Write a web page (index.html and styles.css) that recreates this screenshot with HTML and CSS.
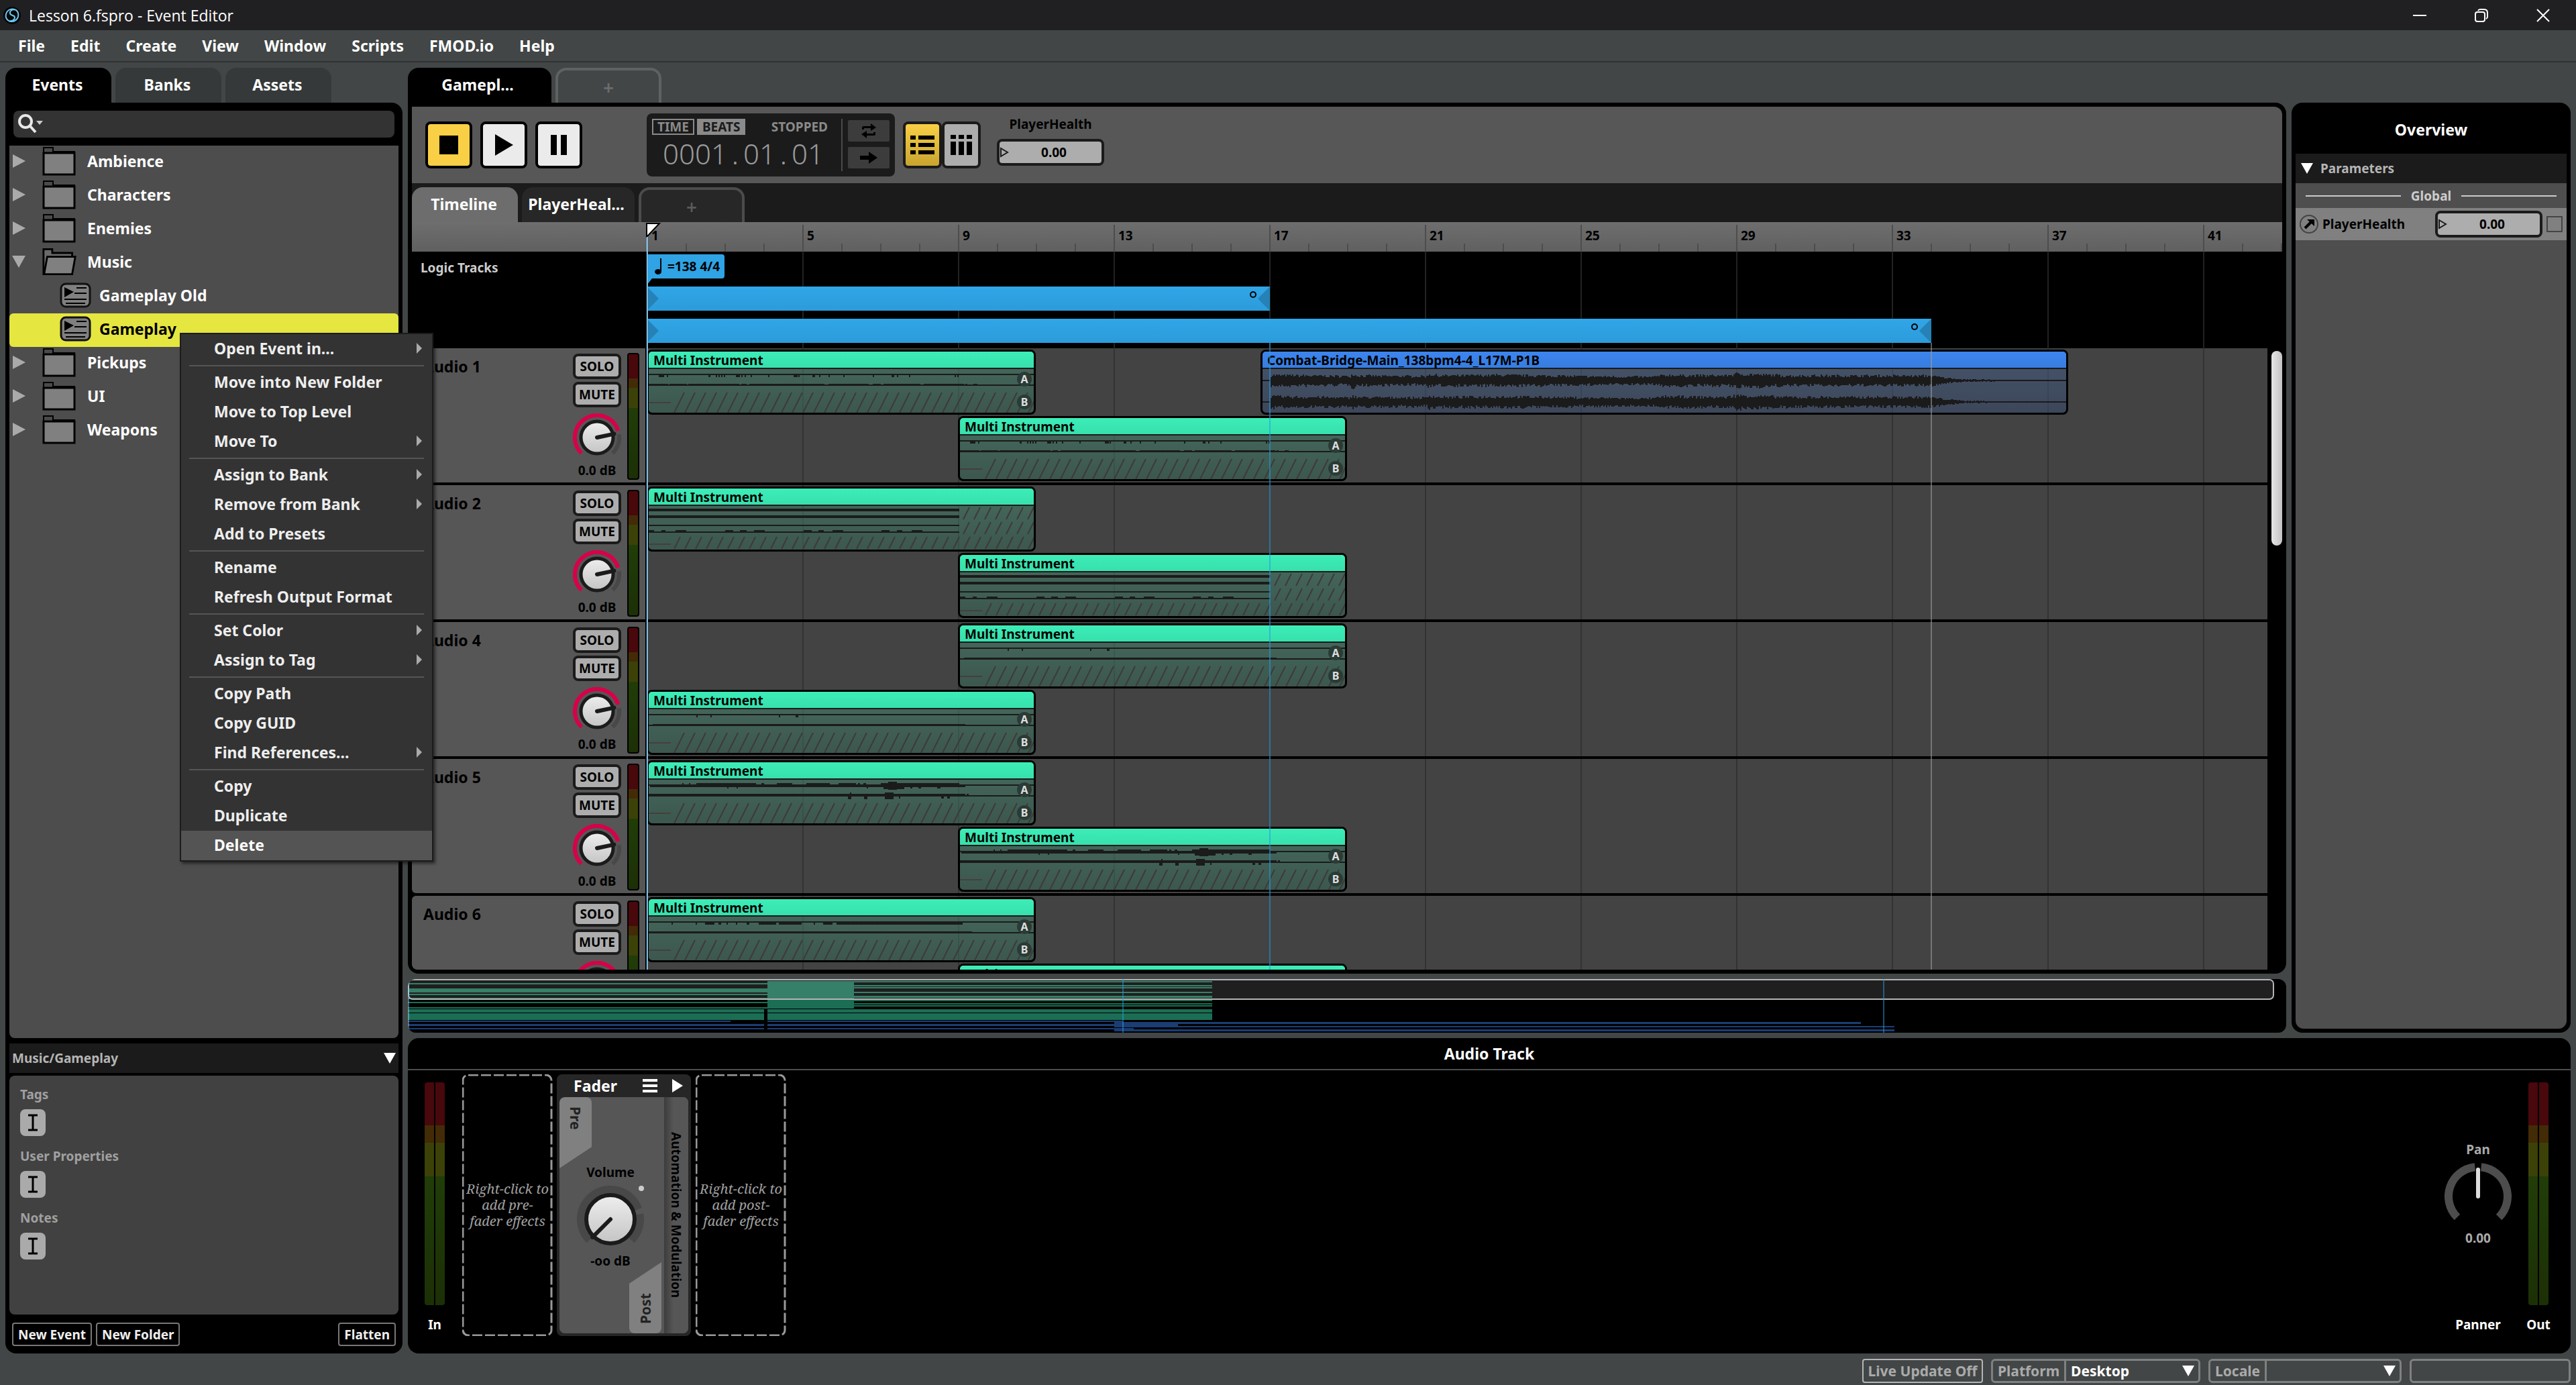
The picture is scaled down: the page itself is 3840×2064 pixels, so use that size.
FILE: index.html
```html
<!DOCTYPE html>
<html lang="en">
<head>
    <meta charset="UTF-8">
    <meta name="viewport" content="width=device-width, initial-scale=1.0">
    <title>Lesson 6.fspro - Event Editor</title>
    <link rel="stylesheet" href="styles.css">
</head>
<body>
    <header class="titlebar">
        <svg class="app-logo" width="26" height="30" viewBox="0 0 26 30">
            <circle cx="13" cy="15" r="13" fill="#05080a"/>
            <path d="M19 7 A10 10 0 0 0 4 13 A9 9 0 0 0 8 23 M19 7 C14 5 9 8 10 12 C11 16 17 14 17 18 C17 22 12 24 8 23 M22 17 A10 10 0 0 1 8 23 M22 17 A10 10 0 0 0 19 7" fill="none" stroke="#6cc7ee" stroke-width="2"/>
        </svg>
        <span class="window-title">Lesson 6.fspro - Event Editor</span>
        <div class="window-buttons">
            <button aria-label="Minimize"><svg width="20" height="20" viewBox="0 0 20 20"><path d="M0 10H20" stroke="#fff" stroke-width="2"/></svg></button>
            <button aria-label="Restore"><svg width="20" height="20" viewBox="0 0 20 20" fill="none" stroke="#fff" stroke-width="2"><rect x="1" y="5" width="14" height="14" rx="3"/><path d="M5 3 Q6 1 8 1 H14 Q19 1 19 6 V12 Q19 14 17 15"/></svg></button>
            <button aria-label="Close"><svg width="20" height="20" viewBox="0 0 20 20"><path d="M1 1L19 19M19 1L1 19" stroke="#fff" stroke-width="2"/></svg></button>
        </div>
    </header>

    <nav class="menubar">
        <button>File</button>
        <button>Edit</button>
        <button>Create</button>
        <button>View</button>
        <button>Window</button>
        <button>Scripts</button>
        <button>FMOD.io</button>
        <button>Help</button>
    </nav>

    <main class="main">
        <!-- Browser -->
        <aside class="browser">
            <div class="tabs">
                <button class="tab active">Events</button>
                <button class="tab">Banks</button>
                <button class="tab">Assets</button>
            </div>
            <div class="browser-panel">
                <div class="search">
                    <svg width="42" height="32" viewBox="0 0 42 32">
                        <circle cx="14" cy="12" r="9" fill="none" stroke="#e8e8e8" stroke-width="4"/>
                        <path d="M20 18L29 28" stroke="#e8e8e8" stroke-width="4"/>
                        <path d="M30 11H40L35 17Z" fill="#ccc"/>
                    </svg>
                    <input type="text" aria-label="Search events">
                </div>
                <ul class="tree" id="tree"></ul>
                <div class="details-head">
                    <span>Music/Gameplay</span>
                    <svg width="18" height="16" viewBox="0 0 18 16"><path d="M0 0H18L9 16Z" fill="#fff"/></svg>
                </div>
                <div class="details" id="details"></div>
                <div class="browser-actions">
                    <button>New Event</button>
                    <button>New Folder</button>
                    <button class="push">Flatten</button>
                </div>
            </div>
        </aside>

        <div class="workspace">
            <div class="upper">
                <section class="center">
                    <div class="tabs">
                        <button class="tab wide active">Gamepl...</button>
                        <button class="tab add">+</button>
                    </div>
                    <div class="editor">
                        <div class="transport">
                            <div class="play-buttons">
                                <button class="stop" aria-label="Stop"><svg width="28" height="28"><rect width="28" height="28"/></svg></button>
                                <button aria-label="Play"><svg width="28" height="34"><path d="M1 1L28 17L1 33Z"/></svg></button>
                                <button aria-label="Pause"><svg width="24" height="30"><path d="M0 0H9V30H0ZM15 0H24V30H15Z"/></svg></button>
                            </div>
                            <div class="display">
                                <div class="display-text">
                                    <div class="display-modes">
                                        <button>TIME</button>
                                        <button class="on">BEATS</button>
                                        <span>STOPPED</span>
                                    </div>
                                    <div class="position">0001<i>.</i>01<i>.</i>01</div>
                                </div>
                                <div class="display-side">
                                    <button aria-label="Loop"><svg width="24" height="24" viewBox="0 0 24 24"><path d="M2 10V7Q2 5 4 5H15V1L23 7L15 12V8H5V10ZM22 14V17Q22 19 20 19H9V23L1 17L9 12V16H19V14Z"/></svg></button>
                                    <button aria-label="Follow"><svg width="26" height="18" viewBox="0 0 26 18"><path d="M0 6H13V0L26 9L13 18V12H0Z"/></svg></button>
                                </div>
                            </div>
                            <div class="view-toggle">
                                <button class="on" aria-label="List view"><svg width="36" height="28"><path d="M0 0H8V6H0ZM12 0H36V6H12ZM0 11H8V17H0ZM12 11H36V17H12ZM0 22H8V28H0ZM12 22H36V28H12Z"/></svg></button>
                                <button aria-label="Mixer view"><svg width="32" height="30"><path d="M0 0H8V6H0ZM12 0H20V6H12ZM24 0H32V6H24ZM0 10H8V30H0ZM12 10H20V30H12ZM24 10H32V30H24Z"/></svg></button>
                            </div>
                            <div class="param">
                                <label for="health-main">PlayerHealth</label>
                                <div class="value-box">
                                    <svg width="14" height="18"><path d="M2 3L12 9L2 15Z" fill="none" stroke="#1b1b1b" stroke-width="2"/></svg>
                                    <input id="health-main" type="text" value="0.00">
                                </div>
                            </div>
                        </div>
                        <div class="sheet-tabs">
                            <button class="tab active">Timeline</button>
                            <button class="tab wider">PlayerHeal...</button>
                            <button class="tab add">+</button>
                        </div>
                        <div class="timeline">
                            <div class="ruler-row">
                                <div class="ruler" id="ruler"></div>
                            </div>
                            <div class="logic">
                                <div class="logic-head">Logic Tracks</div>
                                <div class="logic-lanes">
                                    <div class="tempo">
                                        <svg width="12" height="26"><path d="M10 1V20" stroke="#000" stroke-width="2"/><ellipse cx="6" cy="21" rx="5" ry="4"/></svg>
                                        <span>=138 4/4</span>
                                    </div>
                                    <div class="region first"><i></i></div>
                                    <div class="region second"><i></i></div>
                                </div>
                            </div>
                            <div class="tracks">
                                <div class="track-list" id="tracks"></div>
                                <div class="scroll"><div class="thumb"></div></div>
                            </div>
                            <div class="marker bar17"></div>
                            <div class="marker bar34"></div>
                            <svg class="playhead-top" width="22" height="22"><path d="M1 1H20L1 21Z" fill="#fff" stroke="#000" stroke-width="2"/></svg>
                            <div class="playhead"></div>
                        </div>
                    </div>
                    <div class="minimap">
                        <svg id="minimap" width="100%" height="80" viewBox="0 0 2800 80" preserveAspectRatio="none"></svg>
                    </div>
                </section>

                <aside class="overview">
                    <h2>Overview</h2>
                    <div class="overview-head">
                        <svg width="18" height="16" viewBox="0 0 18 16"><path d="M0 0H18L9 16Z" fill="#fff"/></svg>
                        <span>Parameters</span>
                    </div>
                    <div class="overview-body">
                        <div class="divider"><hr><span>Global</span><hr></div>
                        <div class="param-row">
                            <svg width="28" height="28" viewBox="0 0 28 28">
                                <circle cx="14" cy="14" r="13" fill="none" stroke="#444" stroke-width="2"/>
                                <path d="M8 20L18 10" stroke="#000" stroke-width="4"/><path d="M11 7H22V17Z"/>
                            </svg>
                            <label for="health-side">PlayerHealth</label>
                            <div class="value-box">
                                <svg width="14" height="18"><path d="M2 3L12 9L2 15Z" fill="none" stroke="#1b1b1b" stroke-width="2"/></svg>
                                <input id="health-side" type="text" value="0.00">
                            </div>
                            <input class="tick" type="checkbox" aria-label="Seek PlayerHealth">
                        </div>
                    </div>
                </aside>
            </div>

            <!-- Deck -->
            <section class="deck">
                <h2>Audio Track</h2>
                <div class="deck-body">
                    <div class="io">
                        <div class="meters"><i></i><i></i></div>
                        <span>In</span>
                    </div>
                    <div class="drop">
                        <svg width="135" height="390"><rect x="1" y="1" width="132" height="388" rx="8"/></svg>
                        <p>Right-click to<br>add pre-<br>fader effects</p>
                    </div>
                    <div class="fader">
                        <div class="fader-head">
                            <span>Fader</span>
                            <svg width="22" height="20"><path d="M0 0H22V4H0ZM0 8H22V12H0ZM0 16H22V20H0Z" fill="#fff"/></svg>
                            <svg class="expand" width="16" height="20"><path d="M0 0L16 10L0 20Z" fill="#fff"/></svg>
                        </div>
                        <div class="fader-body">
                            <div class="fader-main">
                                <div class="pre"><span>Pre</span></div>
                                <div class="volume">
                                    <span>Volume</span>
                                    <div id="volume-knob"></div>
                                    <span>-oo dB</span>
                                </div>
                                <div class="post"><span>Post</span></div>
                            </div>
                            <div class="automation"><span>Automation &amp; Modulation</span></div>
                        </div>
                    </div>
                    <div class="drop">
                        <svg width="135" height="390"><rect x="1" y="1" width="132" height="388" rx="8"/></svg>
                        <p>Right-click to<br>add post-<br>fader effects</p>
                    </div>
                    <div class="panner">
                        <div class="pan">
                            <span>Pan</span>
                            <div id="pan-knob"></div>
                            <span>0.00</span>
                        </div>
                        <span class="caption">Panner</span>
                    </div>
                    <div class="io">
                        <div class="meters"><i></i><i></i></div>
                        <span>Out</span>
                    </div>
                </div>
            </section>
        </div>
    </main>

    <footer class="status">
        <button class="live">Live Update Off</button>
        <div class="picker platform">
            <label for="platform">Platform</label>
            <select id="platform"><option>Desktop</option></select>
            <svg width="18" height="16" viewBox="0 0 18 16"><path d="M0 0H18L9 16Z" fill="#fff"/></svg>
        </div>
        <div class="picker locale">
            <label for="locale">Locale</label>
            <select id="locale"><option></option></select>
            <svg width="18" height="16" viewBox="0 0 18 16"><path d="M0 0H18L9 16Z" fill="#fff"/></svg>
        </div>
        <div class="picker blank"></div>
    </footer>

    <div class="context-menu" id="contextMenu"></div>

    <script src="script.js"></script>
</body>
</html>
```
FILE: styles.css
```css
* {
    box-sizing: border-box;
}

body {
    margin: 0;
    height: 100vh;
    display: flex;
    flex-direction: column;
    overflow: hidden;
    background: #424646;
    color: #fff;
    font-family: "Noto Sans", "Open Sans", sans-serif;
    font-size: 19px;
    font-weight: 700;
    line-height: 28px;
}

button, input, select {
    font: inherit;
    color: inherit;
    background: none;
    border: 0;
    padding: 0;
    margin: 0;
}

input {
    min-width: 0;
}

svg {
    display: block;
    flex: none;
}

h2 {
    margin: 0;
    font-size: 23px;
    text-align: center;
}

/* Title bar and menu */
.titlebar {
    flex: none;
    height: 45px;
    display: flex;
    align-items: center;
    padding-left: 5px;
    background: #202022;
}

.window-title {
    margin-left: 12px;
    font-family: "Open Sans", sans-serif;
    font-size: 23px;
    font-weight: 400;
}

.window-buttons {
    display: flex;
    margin: 0 3px 0 auto;
}

.window-buttons button {
    width: 92px;
    height: 45px;
    display: flex;
    align-items: center;
    justify-content: center;
}

.menubar {
    flex: none;
    height: 48px;
    display: flex;
    align-items: center;
    gap: 38px;
    padding-left: 27px;
    font-size: 23px;
    border-bottom: 2px solid #2f3232;
}

/* Tabs */
.main {
    flex: 1;
    min-height: 0;
    display: flex;
    gap: 8px;
    padding: 8px 8px 0;
}

.tabs, .sheet-tabs {
    flex: none;
    display: flex;
    gap: 6px;
}

.tab {
    width: 158px;
    height: 52px;
    padding: 0 3px 2px 0;
    border-radius: 16px 16px 0 0;
    background: #353939;
    font-size: 23px;
    text-align: center;
}

.tab.active {
    background: #000;
}

.tab.wide {
    width: 214px;
    padding-right: 6px;
}

.tab.add {
    padding: 2px 0 0;
    background: #424646;
    border: 4px solid #5f6262;
    border-bottom: 0;
    color: #6a6d6d;
    font-size: 28px;
    font-weight: 600;
}

/* Browser */
.browser {
    flex: none;
    width: 592px;
    display: flex;
    flex-direction: column;
}

.browser-panel {
    flex: 1;
    min-height: 0;
    display: flex;
    flex-direction: column;
    padding: 12px 6px 11px;
    background: #000;
    border-radius: 0 16px 16px 16px;
}

.search {
    flex: none;
    display: flex;
    align-items: center;
    height: 40px;
    margin: 0 6px 12px;
    padding-left: 4px;
    background: #333;
    border-radius: 8px;
}

.search input {
    flex: 1;
    outline: 0;
}

.tree {
    flex: 1;
    margin: 0;
    padding: 0;
    list-style: none;
    font-size: 23px;
    background: #4d4d4d;
    border-radius: 0 0 8px 8px;
}

.tree li {
    display: flex;
    align-items: center;
    height: 50px;
    padding: 0 0 4px 4px;
}

.tree li .arrow {
    width: 20px;
    margin-right: 25px;
}

.tree li .icon {
    width: 52px;
    margin-right: 15px;
}

.tree li.event {
    padding-left: 75px;
}

.tree li.event .icon {
    width: 48px;
    margin-right: 11px;
}

.tree li.selected {
    background: #e6e640;
    color: #000;
    border-radius: 6px;
}

.details-head {
    flex: none;
    display: flex;
    align-items: center;
    justify-content: space-between;
    height: 44px;
    margin-top: 8px;
    padding: 0 4px;
    background: #1b1b1b;
    color: #b5b5b5;
}

.details {
    flex: none;
    height: 356px;
    margin-top: 4px;
    padding: 14px 16px;
    background: #414141;
    border-radius: 8px;
    color: #a0a0a0;
}

.detail {
    height: 92px;
}

.detail button {
    display: flex;
    align-items: center;
    justify-content: center;
    width: 38px;
    height: 40px;
    margin-top: 8px;
    background: #aaa;
    border-radius: 8px;
}

.browser-actions {
    flex: none;
    display: flex;
    gap: 6px;
    padding: 12px 4px 0;
}

.browser-actions button {
    height: 35px;
    padding: 0 7px;
    border: 2px solid #777;
    border-radius: 4px;
    color: #eee;
}

.browser-actions .push {
    margin-left: auto;
}

/* Workspace */
.workspace {
    flex: 1;
    min-width: 0;
    display: flex;
    flex-direction: column;
    gap: 8px;
}

.upper {
    flex: 1;
    min-height: 0;
    display: flex;
    gap: 8px;
}

.center {
    flex: 1;
    min-width: 0;
    display: flex;
    flex-direction: column;
}

.editor {
    flex: 1;
    min-height: 0;
    display: flex;
    flex-direction: column;
    padding: 6px;
    background: #000;
    border-radius: 0 16px 16px 16px;
}

/* Transport */
.transport {
    flex: none;
    height: 114px;
    display: flex;
    align-items: center;
    padding-left: 20px;
    background: #575757;
    border-radius: 0 12px 0 0;
}

.play-buttons {
    display: flex;
    gap: 12px;
    margin-right: 96px;
}

.play-buttons button, .view-toggle button {
    display: flex;
    align-items: center;
    justify-content: center;
    width: 70px;
    height: 70px;
    border: 4px solid #000;
    border-radius: 8px;
    background: #ebebeb;
}

.play-buttons .stop {
    background: #f9cf45;
}

.display {
    display: flex;
    width: 370px;
    height: 94px;
    padding: 8px;
    background: #1b1b1b;
    border-radius: 8px;
    color: #8a8a8a;
}

.display-text {
    width: 284px;
    border-right: 2px solid #4a4a4a;
}

.display-modes {
    display: flex;
    gap: 4px;
    line-height: 20px;
}

.display-modes button {
    height: 24px;
    padding: 0 6px;
    border: 2px solid #8a8a8a;
    line-height: 20px;
}

.display-modes .on {
    background: #8a8a8a;
    color: #1b1b1b;
}

.display-modes span {
    margin: 2px 0 0 auto;
    padding-right: 20px;
}

.position {
    padding-left: 16px;
    font-size: 42px;
    font-weight: 300;
    line-height: 56px;
    color: #999;
}

.position i {
    display: inline-block;
    width: 24px;
    font-style: normal;
    text-align: center;
}

.display-side {
    display: flex;
    flex-direction: column;
    gap: 8px;
    padding: 2px 0 0 8px;
}

.display-side button {
    display: flex;
    align-items: center;
    justify-content: center;
    width: 62px;
    height: 32px;
    background: #3c3c3c;
    border-radius: 2px;
}

.view-toggle {
    display: flex;
    margin: 0 24px 0 12px;
}

.view-toggle button {
    width: 58px;
    border-color: #1b1b1b;
    background: #adadad;
}

.view-toggle .on {
    background: linear-gradient(#f9cf45, #c8a52f);
}

.param {
    width: 160px;
    display: flex;
    flex-direction: column;
    align-items: center;
    gap: 8px;
    margin-top: -14px;
    color: #000;
}

.value-box {
    display: flex;
    align-items: center;
    width: 160px;
    height: 40px;
    border: 4px solid #1b1b1b;
    border-radius: 8px;
    background: #adadad;
    color: #000;
}

.value-box input {
    flex: 1;
    padding-right: 4px;
    text-align: center;
}

.sheet-tabs {
    height: 58px;
    padding-top: 6px;
    background: #1b1b1b;
}

.sheet-tabs .tab {
    background: #272727;
}

.sheet-tabs .tab.active {
    background: #6d6d6d;
}

.sheet-tabs .wider {
    width: 168px;
    padding-right: 6px;
}

.sheet-tabs .tab.add {
    border-color: #4c4c4c;
    color: #5a5a5a;
}

/* Timeline: one bar is 58px wide */
.timeline {
    position: relative;
    flex: 1;
    min-height: 0;
    display: flex;
    flex-direction: column;
    overflow: hidden;
    border-radius: 0 0 8px 8px;
}

.ruler-row {
    flex: none;
    height: 44px;
    padding-left: 350px;
    background: linear-gradient(#6e6e6e, #606060);
}

.ruler {
    position: relative;
    height: 44px;
    overflow: hidden;
    color: #000;
    background:
        repeating-linear-gradient(90deg, #4d4d4d 0 2px, transparent 2px 232px) 0 4px / 100% 40px no-repeat,
        repeating-linear-gradient(90deg, #4d4d4d 0 2px, transparent 2px 58px) 0 32px / 100% 12px no-repeat;
}

.ruler span {
    position: absolute;
    top: 6px;
}

.logic {
    flex: none;
    display: flex;
    height: 144px;
}

.logic-head {
    width: 350px;
    padding: 10px 13px;
    color: #ccc;
}

.logic-lanes {
    flex: 1;
    padding-top: 4px;
    background: repeating-linear-gradient(90deg, #222 0 2px, transparent 2px 232px);
}

.tempo {
    position: relative;
    display: flex;
    align-items: center;
    gap: 8px;
    width: 116px;
    height: 36px;
    padding-left: 11px;
    background: #2fa3e4;
    border-radius: 0 4px 4px 0;
    color: #000;
}

.tempo::after {
    content: "";
    position: absolute;
    left: 0;
    top: 36px;
    border-top: 10px solid #2fa3e4;
    border-right: 8px solid transparent;
}

.region {
    position: relative;
    height: 36px;
    margin-top: 12px;
    background: linear-gradient(#30a6e8, #2c9bda);
}

.region.first {
    width: 929px;
}

.region.second {
    width: 1915px;
}

.region::before, .region::after {
    content: "";
    position: absolute;
    top: 0;
    width: 18px;
    height: 36px;
    background: #2581b6;
}

.region::before {
    left: 0;
    clip-path: polygon(0 0, 100% 50%, 0 100%);
}

.region::after {
    right: 0;
    clip-path: polygon(100% 0, 0 50%, 100% 100%);
}

.region i {
    position: absolute;
    right: 20px;
    top: 7px;
    width: 10px;
    height: 10px;
    border: 2px solid #000;
    border-radius: 50%;
}

.tracks {
    flex: 1;
    min-height: 0;
    display: flex;
}

.track-list {
    flex: 1;
    min-width: 0;
    overflow: hidden;
}

.track {
    display: flex;
    height: 200px;
    margin-bottom: 4px;
}

.track-head {
    flex: none;
    width: 350px;
    display: flex;
    justify-content: space-between;
    padding: 8px 9px 4px 17px;
    border-right: 2px solid #000;
    border-radius: 6px 0 0 6px;
    background: #565656;
    color: #000;
}

.track-name {
    flex: 1;
    padding-top: 5px;
    font-size: 23px;
}

.strip {
    display: flex;
    flex-direction: column;
    align-items: center;
    width: 72px;
    margin-right: 9px;
}

.strip button {
    width: 72px;
    height: 40px;
    margin-bottom: 4px;
    border: 4px solid #1b1b1b;
    border-radius: 8px;
    background: #adadad;
}

.strip svg {
    margin-top: 5px;
}

.strip span {
    margin-top: -5px;
}

.meter {
    width: 18px;
    border: 2px solid #000;
    border-radius: 4px;
    margin-top: -1px;
    background: linear-gradient(#49080c 0 36px, #432b07 36px 50px, #3c4108 50px 80px, #213d08 80px, #1c3006);
}

.lane {
    position: relative;
    flex: 1;
    overflow: hidden;
    background: repeating-linear-gradient(90deg, #333 0 2px, #434343 2px 232px);
}

.clip {
    position: absolute;
    height: 97px;
    border: 3px solid #000;
    border-radius: 8px;
    overflow: hidden;
    color: #000;
    background: linear-gradient(rgba(73, 145, 121, .5), rgba(53, 107, 89, .5));
}

.clip-name {
    height: 26px;
    padding-left: 7px;
    line-height: 26px;
    white-space: nowrap;
    border-bottom: 2px solid #1b1b1b;
    background: linear-gradient(#3cedb8, #37e0ac);
}

.clip.audio {
    background: linear-gradient(rgba(71, 101, 145, .5), rgba(55, 75, 113, .5));
}

.clip.audio .clip-name {
    background: linear-gradient(#3d85ee, #377de0);
}

.badge {
    position: absolute;
    right: 3px;
    top: 30px;
    width: 22px;
    height: 22px;
    border-radius: 50%;
    background: #2a3b36;
    color: #ddd;
    font-size: 16px;
    line-height: 22px;
    text-align: center;
}

.badge.b {
    top: 64px;
}

.scroll {
    flex: none;
    width: 22px;
    padding: 4px 0 0 6px;
}

.thumb {
    height: 290px;
    border-radius: 8px;
    background: linear-gradient(90deg, #e6e6e6, #c4c4c4);
}

.marker {
    position: absolute;
    top: 180px;
    bottom: 0;
    width: 2px;
    background: #2a9fe0;
    opacity: .6;
}

.bar17 {
    left: 1278px;
}

.bar34 {
    left: 2264px;
    background: #999;
}

.playhead {
    position: absolute;
    left: 350px;
    top: 22px;
    bottom: 0;
    width: 2px;
    background: linear-gradient(90deg, #d8f0ff 50%, #2a9fe0 50%);
}

.playhead-top {
    position: absolute;
    left: 349px;
    top: 1px;
}

.minimap {
    flex: none;
    height: 80px;
    margin-top: 8px;
    background: #000;
    border-radius: 12px;
    overflow: hidden;
}

/* Overview */
.overview {
    flex: none;
    width: 416px;
    display: flex;
    flex-direction: column;
    margin-top: 52px;
    padding: 0 6px 6px;
    background: #000;
    border-radius: 16px;
}

.overview h2 {
    height: 76px;
    line-height: 80px;
}

.overview-head {
    display: flex;
    align-items: center;
    gap: 11px;
    height: 44px;
    padding-left: 8px;
    background: #1b1b1b;
    color: #b5b5b5;
}

.overview-body {
    flex: 1;
    background: #4e4e4e;
    border-radius: 0 0 12px 12px;
}

.divider {
    display: flex;
    align-items: center;
    gap: 15px;
    height: 37px;
    padding: 0 15px;
    color: #ccc;
}

.divider hr {
    flex: 1;
    margin: 0;
    border: 0;
    border-top: 2px solid #ccc;
}

.param-row {
    display: flex;
    align-items: center;
    gap: 6px;
    height: 48px;
    padding: 0 6px;
    background: #808080;
    color: #000;
}

.param-row .value-box {
    margin-left: auto;
}

.tick {
    appearance: none;
    width: 24px;
    height: 24px;
    border: 2px solid #444;
}

/* Deck */
.deck {
    flex: none;
    background: #000;
    border-radius: 16px;
}

.deck h2 {
    height: 48px;
    line-height: 46px;
    border-bottom: 2px solid #4a4e4e;
}

.deck-body {
    display: flex;
    align-items: flex-start;
    height: 422px;
    padding: 6px 20px 26px 12px;
}

.io {
    display: flex;
    flex-direction: column;
    align-items: center;
    gap: 15px;
    width: 56px;
    padding-top: 12px;
}

.meters {
    display: flex;
    gap: 2px;
}

.meters i {
    width: 14px;
    height: 332px;
    border-radius: 4px 0 0 4px;
    background: linear-gradient(#49080c 0 64px, #432b07 64px 90px, #3c4108 90px 140px, #213d08 140px, #1c3006);
}

.meters i + i {
    border-radius: 0 4px 4px 0;
}

.drop {
    position: relative;
    display: flex;
    align-items: center;
    justify-content: center;
    width: 135px;
    height: 390px;
    margin-left: 13px;
    color: #a0a0a0;
    font-family: "Noto Serif", "Liberation Serif", serif;
    font-size: 20px;
    font-style: italic;
    font-weight: 400;
    line-height: 24px;
    text-align: center;
}

.drop p {
    margin: 0;
    white-space: nowrap;
}

.drop svg {
    position: absolute;
    left: 0;
    top: 0;
    fill: none;
    stroke: #999;
    stroke-width: 3px;
    stroke-dasharray: 15 4;
}

.fader {
    width: 200px;
    height: 390px;
    margin-left: 6px;
    padding: 0 4px 4px;
    background: #262626;
    border-radius: 8px;
}

.fader + .drop {
    margin-left: 7px;
}

.fader-head {
    display: flex;
    align-items: center;
    justify-content: flex-end;
    height: 34px;
    padding-right: 8px;
    font-size: 23px;
}

.fader-head span {
    margin-right: 38px;
}

.fader-head .expand {
    margin-left: 22px;
}

.fader-body {
    display: flex;
    height: 352px;
    border-radius: 8px;
    overflow: hidden;
    background: #565656;
    color: #000;
}

.fader-main {
    display: flex;
    flex-direction: column;
    width: 156px;
}

.pre, .post {
    width: 48px;
    height: 106px;
    padding-top: 14px;
    background: #808080;
    color: #222;
    font-size: 21px;
    writing-mode: vertical-rl;
    line-height: 48px;
    border-radius: 8px 8px 0 0;
    clip-path: polygon(0 0, 100% 0, 100% 70%, 0 100%);
}

.post {
    align-self: flex-end;
    margin-right: 4px;
    transform: rotate(180deg);
}

.volume {
    display: flex;
    flex-direction: column;
    align-items: center;
    width: 152px;
    height: 140px;
    margin-top: -8px;
    margin-bottom: 8px;
}

#volume-knob {
    margin: 4px 0 -4px;
}

.automation {
    display: flex;
    align-items: center;
    justify-content: center;
    width: 36px;
    background: linear-gradient(90deg, #3c3c3c, #565656 14px);
    writing-mode: vertical-rl;
    line-height: 36px;
    white-space: nowrap;
}

.panner {
    display: flex;
    flex-direction: column;
    align-items: center;
    justify-content: space-between;
    width: 116px;
    height: 387px;
    margin-left: auto;
    margin-right: 4px;
    padding-top: 98px;
}

.pan {
    display: flex;
    flex-direction: column;
    align-items: center;
    color: #aaa;
}

#pan-knob {
    margin: 4px 0 -4px;
}

/* Status bar */
.status {
    flex: none;
    height: 47px;
    display: flex;
    justify-content: flex-end;
    gap: 12px;
    padding: 8px 8px 3px;
    color: #aaa;
    font-size: 21px;
}

.live {
    width: 180px;
    border: 2px solid #b5b5b5;
    border-radius: 4px;
    white-space: nowrap;
}

.picker {
    position: relative;
    display: flex;
    align-items: stretch;
    border: 3px solid #808080;
    border-radius: 6px;
}

.picker label {
    padding: 1px 7px 0;
    border-right: 3px solid #808080;
}

.picker select {
    flex: 1;
    appearance: none;
    padding-left: 7px;
    color: #fff;
    line-height: 28px;
    outline: 0;
}

.picker svg {
    position: absolute;
    right: 6px;
    top: 7px;
    pointer-events: none;
}

.platform {
    width: 312px;
}

.locale {
    width: 288px;
}

.blank {
    width: 240px;
}

/* Context menu */
.context-menu {
    position: absolute;
    left: 268px;
    top: 496px;
    width: 378px;
    background: #333;
    border: 2px solid #1c1c1c;
    box-shadow: 3px 3px 4px rgba(0, 0, 0, .5);
    font-size: 23px;
    color: #eee;
}

.context-menu button {
    display: flex;
    align-items: center;
    justify-content: space-between;
    width: 100%;
    height: 44px;
    padding: 0 15px 2px 49px;
}

.context-menu button.hover {
    background: #545454;
    color: #fff;
}

.context-menu hr {
    height: 2px;
    margin: 2px 12px;
    border: 0;
    background: #555;
}
```
FILE: script.js
```js
const BAR = 58;

// Event tree
const folderIcon = '<svg class="icon" width="52" height="44" viewBox="0 0 52 44"><path d="M2 42V2H16V8H48V42Z" fill="#4a4a4a" stroke="#000" stroke-width="2"/><rect x="2" y="10" width="46" height="32" fill="#808080" stroke="#000" stroke-width="3"/></svg>';
const openIcon = '<svg class="icon" width="56" height="44" viewBox="0 0 56 44"><path d="M2 42V2H16V8H48V42Z" fill="#6a6a6a" stroke="#000" stroke-width="3"/><path d="M3 42L8 14H53L48 42Z" fill="#808080" stroke="#000" stroke-width="3"/></svg>';
const eventIcon = '<svg class="icon" width="48" height="38" viewBox="0 0 48 38"><rect x="2" y="2" width="43" height="34" rx="7" fill="#808080" stroke="#111" stroke-width="3"/><path d="M7 7L21 14L7 22Z"/><path d="M25 8H40M22 16H40M7 25H40M9 31H38" stroke="#000" stroke-width="2"/></svg>';
const arrowRight = '<svg class="arrow" width="20" height="20"><path d="M1 0L20 10L1 20Z" fill="#aaa"/></svg>';
const arrowDown = '<svg class="arrow" width="20" height="20"><path d="M0 1H20L10 19Z" fill="#aaa"/></svg>';

const items = [
    ['Ambience', 'folder'], ['Characters', 'folder'], ['Enemies', 'folder'], ['Music', 'open'],
    ['Gameplay Old', 'event'], ['Gameplay', 'event selected'],
    ['Pickups', 'folder'], ['UI', 'folder'], ['Weapons', 'folder']
];

document.getElementById('tree').innerHTML = items.map(([name, type]) => {
    let icon = arrowRight + folderIcon;
    if (type === 'open') icon = arrowDown + openIcon;
    if (type.startsWith('event')) icon = eventIcon;
    return `<li class="${type}">${icon}<span>${name}</span></li>`;
}).join('');

// Event details
document.getElementById('details').innerHTML = ['Tags', 'User Properties', 'Notes'].map(name =>
    `<div class="detail"><div>${name}</div><button aria-label="Edit ${name}"><svg width="14" height="26"><path d="M0 2H6L7 3L8 2H14M7 3V23M0 24H6L7 23L8 24H14" fill="none" stroke="#000" stroke-width="3"/></svg></button></div>`
).join('');

// Context menu, '>' marks a submenu and '-' a separator
const menu = [
    'Open Event in...>', '-',
    'Move into New Folder', 'Move to Top Level', 'Move To>', '-',
    'Assign to Bank>', 'Remove from Bank>', 'Add to Presets', '-',
    'Rename', 'Refresh Output Format', '-',
    'Set Color>', 'Assign to Tag>', '-',
    'Copy Path', 'Copy GUID', 'Find References...>', '-',
    'Copy', 'Duplicate', 'Delete'
];

document.getElementById('contextMenu').innerHTML = menu.map(entry => {
    if (entry === '-') return '<hr>';
    const name = entry.replace('>', '');
    const arrow = entry.endsWith('>') ? '<svg width="8" height="16"><path d="M0 0L8 8L0 16Z" fill="#aaa"/></svg>' : '';
    return `<button${name === 'Delete' ? ' class="hover"' : ''}>${name}${arrow}</button>`;
}).join('');

// Ruler
let labels = '';
for (let bar = 1; bar <= 41; bar += 4) {
    labels += `<span style="left:${(bar - 1) * BAR + 7}px">${bar}</span>`;
}
document.getElementById('ruler').innerHTML = labels;

// Knobs, angles are clockwise from the top
function arc(c, r, from, to, color, width) {
    const point = a => {
        const rad = (a - 90) * Math.PI / 180;
        return `${(c + r * Math.cos(rad)).toFixed(1)} ${(c + r * Math.sin(rad)).toFixed(1)}`;
    };
    const large = to - from > 180 ? 1 : 0;
    return `<path d="M${point(from)} A${r} ${r} 0 ${large} 1 ${point(to)}" fill="none" stroke="${color}" stroke-width="${width}"/>`;
}

function knobFace(c, r, ring, angle) {
    return `<circle cx="${c}" cy="${c}" r="${r}" fill="url(#face)" stroke="#1b1b1b" stroke-width="${ring}"/>
        <path d="M${c} ${c}V${c - r - 2}" stroke="#1b1b1b" stroke-width="6" stroke-linecap="round" transform="rotate(${angle} ${c} ${c})"/>`;
}

const faceDef = '<defs><linearGradient id="face" x1="0" y1="0" x2="0" y2="1"><stop offset="0" stop-color="#eee"/><stop offset="1" stop-color="#c4c4c4"/></linearGradient></defs>';

const trackKnob = `<svg width="72" height="76" viewBox="0 0 72 76">${faceDef}
    ${arc(36, 33, -135, 72, '#d80048', 6)}${arc(36, 33, 82, 135, '#484848', 6)}${knobFace(36, 24, 5, 78)}</svg>`;

document.getElementById('volume-knob').innerHTML = `<svg width="104" height="104" viewBox="0 0 104 104">${faceDef}
    ${arc(52, 44, -135, 70, '#484848', 12)}${arc(52, 44, 80, 135, '#484848', 12)}${knobFace(52, 36, 6, -135)}
    <circle cx="98" cy="6" r="4" fill="#ccc"/></svg>`;

document.getElementById('pan-knob').innerHTML = `<svg width="104" height="104" viewBox="0 0 104 104">
    ${arc(52, 44, -135, -6, '#4d4d4d', 12)}${arc(52, 44, 6, 135, '#4d4d4d', 12)}
    <path d="M52 52V12" stroke="#ddd" stroke-width="6" stroke-linecap="round"/></svg>`;

// Slanted fill for the empty part of a clip
function hatch(x, y, width, height) {
    let d = '';
    for (let i = x + 4; i < x + width; i += 16) {
        d += `M${i} ${y + height}l${height / 2} -${height}`;
    }
    return `<path d="${d}" stroke="#3f3a38" stroke-width="2" fill="none"/>`;
}

function rects(list) {
    return list.map(([x, y, w, h]) => `M${x} ${y}h${w}v${h}h-${w}z`).join('');
}

// Waveform bumps as [x, y, width, height]
const waves = {
    a1: [[0, 22, 29, 2], [31, 22, 26, 2], [59, 22, 76, 2], [138, 22, 8, 2], [150, 22, 112, 2], [268, 22, 60, 2], [334, 22, 12, 2], [350, 22, 55, 2], [410, 22, 60, 2], [472, 22, 3, 2], [484, 22, 6, 2],
        [15, 9, 8, 3], [27, 9, 2, 3], [89, 9, 3, 3], [100, 9, 2, 3], [104, 9, 2, 3], [108, 9, 2, 3], [112, 9, 2, 3], [130, 9, 6, 3], [138, 9, 2, 3], [143, 9, 2, 3], [152, 9, 2, 3], [178, 9, 2, 3], [216, 9, 6, 3], [223, 9, 2, 3], [244, 9, 4, 3], [254, 9, 2, 3], [268, 9, 2, 3], [290, 9, 2, 3], [334, 9, 2, 3], [362, 9, 4, 3], [370, 9, 2, 3], [388, 9, 2, 3], [456, 9, 2, 3], [460, 9, 2, 3]],
    a4: [[6, 22, 466, 3], [71, 9, 2, 3], [92, 9, 2, 3], [194, 9, 2, 3], [219, 9, 4, 3]],
    a5: [[2, 7, 470, 4], [50, 5, 2, 3], [60, 5, 2, 3], [71, 5, 89, 3], [168, 5, 4, 3], [191, 5, 23, 3], [235, 5, 35, 3], [283, 5, 26, 3], [312, 5, 3, 3], [320, 5, 4, 3], [346, 5, 117, 3], [357, 3, 13, 12], [350, 9, 31, 5], [117, 10, 2, 3], [131, 10, 2, 3], [325, 10, 2, 3], [390, 10, 3, 3], [402, 10, 4, 3], [430, 10, 5, 3],
        [0, 21, 472, 4], [352, 19, 13, 10], [300, 19, 2, 3], [297, 24, 5, 5], [321, 24, 5, 5], [373, 24, 2, 4], [436, 24, 4, 4], [445, 24, 4, 4], [474, 21, 3, 3]],
    a6: [[0, 22, 482, 3], [34, 9, 2, 3], [70, 9, 2, 3], [84, 9, 14, 3], [104, 9, 4, 3], [116, 9, 2, 3], [130, 9, 2, 3], [146, 9, 4, 3], [164, 9, 26, 3], [194, 9, 34, 3], [246, 9, 2, 3], [260, 9, 14, 3], [280, 9, 188, 3]]
};

function multiBody(wave) {
    if (wave === 'a2') {
        const steps = [[0, 8], [19, 6], [40, 16], [114, 12], [136, 10], [157, 16], [231, 12], [253, 8], [274, 16], [347, 12], [370, 8], [392, 16]];
        return `<path d="${rects([[0, 4, 463, 4], [0, 14, 463, 4], [0, 28, 463, 2], [0, 38, 463, 2]])}${rects(steps.map(s => [s[0], 36, s[1], 2]))}" fill="#1b1b1b"/>
            ${hatch(465, 2, 112, 18)}${hatch(465, 24, 112, 18)}${hatch(34, 46, 540, 18)}
            <path d="M0 57H33" stroke="#463f3d" stroke-width="2"/>`;
    }
    return `<path d="${rects([[0, 7, 580, 2], [0, 23, 580, 2]])}${rects(waves[wave])}" fill="#1b1b1b"/>
        ${hatch(34, 35, 540, 30)}<path d="M0 50H33" stroke="#463f3d" stroke-width="2"/>`;
}

// Stereo waveform, envelope holds [x, amplitude] points
function stereoBody() {
    const envelope = [[12, 9], [80, 8], [130, 7], [133, 12], [140, 8], [244, 7], [247, 11], [262, 8], [360, 9], [480, 7], [580, 6], [600, 9], [690, 8], [705, 11], [790, 8], [920, 8], [995, 8], [1020, 4], [1045, 2], [1110, 1], [1197, 1]];
    let seed = 7;
    const noise = () => (seed = (seed * 16807) % 2147483647) / 2147483647;
    let d = '';
    [17, 49].forEach(mid => {
        d += `M0 ${mid - 1}h1200v2h-1200z`;
        let k = 0;
        for (let x = 12; x < 1110; x += 2) {
            while (envelope[k + 1][0] < x) k++;
            const [x0, a0] = envelope[k];
            const [x1, a1] = envelope[k + 1];
            const amp = a0 + (a1 - a0) * (x - x0) / (x1 - x0);
            const up = Math.round(amp * (.6 + noise() * .5));
            const down = Math.round(amp * (.6 + noise() * .6));
            d += `M${x} ${mid - up}h2v${up + down}h-2z`;
        }
    });
    return `<path d="${d}" fill="#1b1b1b"/>`;
}

// Tracks, each clip is [left, top, width, waveform]
const first = 0, ninth = 8 * BAR, upper = 2, lower = 101, length = 10 * BAR;
const tracks = [
    ['Audio 1', [[first, upper, length, 'a1'], [ninth, lower, length, 'a1'], [915, upper, 1204, 'bridge']]],
    ['Audio 2', [[first, upper, length, 'a2'], [ninth, lower, length, 'a2']]],
    ['Audio 4', [[ninth, upper, length, 'a4'], [first, lower, length, 'a4']]],
    ['Audio 5', [[first, upper, length, 'a5'], [ninth, lower, length, 'a5']]],
    ['Audio 6', [[first, upper, length, 'a6'], [ninth, lower, length, 'a6']]]
];

function clipHtml([left, top, width, wave]) {
    const audio = wave === 'bridge';
    const name = audio ? 'Combat-Bridge-Main_138bpm4-4_L17M-P1B' : 'Multi Instrument';
    const badges = audio || wave === 'a2' ? '' : '<span class="badge">A</span><span class="badge b">B</span>';
    return `<div class="clip${audio ? ' audio' : ''}" style="left:${left}px;top:${top}px;width:${width}px">
        <div class="clip-name">${name}</div>
        <svg width="100%" height="65">${audio ? stereoBody() : multiBody(wave)}</svg>${badges}
    </div>`;
}

document.getElementById('tracks').innerHTML = tracks.map(([name, clips]) => `
    <div class="track">
        <div class="track-head">
            <span class="track-name">${name}</span>
            <div class="strip">
                <button>SOLO</button>
                <button>MUTE</button>
                ${trackKnob}
                <span>0.0 dB</span>
            </div>
            <div class="meter"></div>
        </div>
        <div class="lane">${clips.map(clipHtml).join('')}</div>
    </div>`).join('');

// Minimap rows as [x, y, width, height]
const green = [
    [0, 0, 665, 2], [0, 6, 665, 2], [0, 14, 665, 6], [0, 22, 665, 2], [0, 28, 665, 2], [0, 34, 665, 2], [0, 42, 665, 2],
    [536, 3, 129, 41], [536, 3, 663, 2], [536, 9, 663, 2], [536, 12, 663, 2], [536, 19, 663, 2], [536, 25, 663, 3], [536, 31, 663, 2], [536, 36, 663, 2], [536, 39, 663, 2],
    [0, 45, 531, 5], [0, 51, 531, 5], [0, 56, 531, 5], [536, 45, 663, 5], [536, 51, 663, 5], [536, 56, 663, 5]
];
const blue = [
    [1053, 0, 1379, 2], [0, 62, 481, 2], [536, 62, 529, 2], [1053, 64, 1113, 3], [0, 67, 531, 3], [536, 67, 612, 3],
    [1053, 70, 1163, 2], [0, 73, 531, 2], [536, 73, 546, 2], [1053, 75, 1163, 3]
];
document.getElementById('minimap').innerHTML = `
    <path d="${rects(green)}" fill="#1b6e54"/>
    <path d="${rects(blue)}" fill="#1a3d74"/>
    <rect x="1" y="1" width="2780" height="29" rx="6" fill="#fff" fill-opacity=".12" stroke="#b4b4b4" stroke-width="2"/>
    <path d="M1 2V78" stroke="#8fd0f5" stroke-width="1"/>
    <path d="M1066 0V80M2200 0V80" stroke="#2a9fe0" stroke-width="1"/>`;
```
